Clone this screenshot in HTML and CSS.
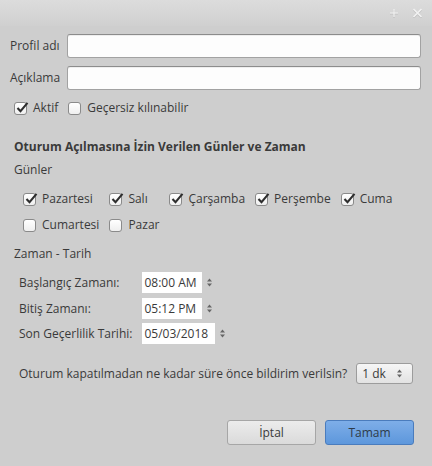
FILE: index.html
```html
<!DOCTYPE html>
<html lang="tr">
<head>
<meta charset="utf-8">
<link rel="stylesheet" href="styles.css">
</head>
<body>
<div class="window">
  <div class="titlebar">
    <svg class="tb-icon" width="10" height="10" viewBox="0 0 10 10"><path d="M5 1v8M1 5h8" stroke="#9a9a9a" stroke-width="1.2" opacity=".35" transform="translate(0,1)"/><path d="M5 1v8M1 5h8" stroke="#f2f2f2" stroke-width="1.2"/></svg>
    <svg class="tb-icon" width="11" height="10" viewBox="0 0 11 10"><path d="M1.5 1l8 8M9.5 1l-8 8" stroke="#9a9a9a" stroke-width="1.6" opacity=".35" transform="translate(0,1)"/><path d="M1.5 1l8 8M9.5 1l-8 8" stroke="#f2f2f2" stroke-width="1.6"/></svg>
  </div>
  <div class="content">
    <div class="fields">
      <label class="flabel">Profil adı</label>
      <div class="entry"></div>
      <label class="flabel">Açıklama</label>
      <div class="entry"></div>
    </div>

    <div class="checkrow top-checks">
      <span class="check"><span class="cb on"><svg viewBox="0 0 16 16" width="16" height="16"><path d="M3.5 8l3 3.2L13.5 2.8" fill="none" stroke="#2e2e2e" stroke-width="2.1"/></svg></span>Aktif</span>
      <span class="check"><span class="cb"></span>Geçersiz kılınabilir</span>
    </div>

    <div class="section">
      <div class="heading">Oturum Açılmasına İzin Verilen Günler ve Zaman</div>
      <div class="sublabel">Günler</div>
      <div class="days">
        <span class="check"><span class="cb on"><svg viewBox="0 0 16 16" width="16" height="16"><path d="M3.5 8l3 3.2L13.5 2.8" fill="none" stroke="#2e2e2e" stroke-width="2.1"/></svg></span>Pazartesi</span>
        <span class="check"><span class="cb on"><svg viewBox="0 0 16 16" width="16" height="16"><path d="M3.5 8l3 3.2L13.5 2.8" fill="none" stroke="#2e2e2e" stroke-width="2.1"/></svg></span>Salı</span>
        <span class="check"><span class="cb on"><svg viewBox="0 0 16 16" width="16" height="16"><path d="M3.5 8l3 3.2L13.5 2.8" fill="none" stroke="#2e2e2e" stroke-width="2.1"/></svg></span>Çarşamba</span>
        <span class="check"><span class="cb on"><svg viewBox="0 0 16 16" width="16" height="16"><path d="M3.5 8l3 3.2L13.5 2.8" fill="none" stroke="#2e2e2e" stroke-width="2.1"/></svg></span>Perşembe</span>
        <span class="check"><span class="cb on"><svg viewBox="0 0 16 16" width="16" height="16"><path d="M3.5 8l3 3.2L13.5 2.8" fill="none" stroke="#2e2e2e" stroke-width="2.1"/></svg></span>Cuma</span>
        <span class="check"><span class="cb"></span>Cumartesi</span>
        <span class="check"><span class="cb"></span>Pazar</span>
      </div>

      <div class="sublabel zt">Zaman - Tarih</div>
      <div class="times">
        <span class="tlabel">Başlangıç Zamanı:</span>
        <span class="spin"><span class="sbox w-time">08:00 AM</span><svg class="arrows" width="7" height="11" viewBox="0 0 7 11"><path d="M1 4.5L3.5 1.5 6 4.5zM1 6.5L3.5 9.5 6 6.5z" fill="#666"/></svg></span>
        <span class="tlabel">Bitiş Zamanı:</span>
        <span class="spin"><span class="sbox w-time">05:12 PM</span><svg class="arrows" width="7" height="11" viewBox="0 0 7 11"><path d="M1 4.5L3.5 1.5 6 4.5zM1 6.5L3.5 9.5 6 6.5z" fill="#666"/></svg></span>
        <span class="tlabel">Son Geçerlilik Tarihi:</span>
        <span class="spin"><span class="sbox w-date">05/03/2018</span><svg class="arrows" width="7" height="11" viewBox="0 0 7 11"><path d="M1 4.5L3.5 1.5 6 4.5zM1 6.5L3.5 9.5 6 6.5z" fill="#666"/></svg></span>
      </div>

      <div class="notify">
        <span>Oturum kapatılmadan ne kadar süre önce bildirim verilsin?</span>
        <span class="combo"><span>1 dk</span><svg width="7" height="11" viewBox="0 0 7 11"><path d="M1 4.5L3.5 1.5 6 4.5zM1 6.5L3.5 9.5 6 6.5z" fill="#666"/></svg></span>
      </div>
    </div>

    <div class="actions">
      <button class="btn">İptal</button>
      <button class="btn primary">Tamam</button>
    </div>
  </div>
</div>
</body>
</html>
```

FILE: styles.css
```css
* { box-sizing: border-box; }
html, body { margin: 0; padding: 0; }
body { background: #cecece; }

.window {
  width: 432px;
  height: 466px;
  background: #cecece;
  font-family: "Open Sans", "Noto Sans", sans-serif;
  font-size: 12px;
  color: #3a3a3a;
  overflow: hidden;
}

.titlebar {
  height: 26px;
  background: linear-gradient(#dcdcdc, #d0d0d0);
  display: flex;
  justify-content: flex-end;
  align-items: center;
  gap: 13px;
  padding-right: 9px;
  padding-bottom: 1px;
}
.tb-icon { display: block; }

.content { padding: 8px 11px 0 10px; }

.fields {
  display: grid;
  grid-template-columns: auto 1fr;
  column-gap: 7px;
  row-gap: 8px;
  align-items: center;
}
.flabel { line-height: 16px; }
.entry {
  height: 24px;
  background: #fdfdfd;
  border: 1px solid #a2a2a2;
  border-top-color: #8c8c8c;
  border-radius: 3px;
  box-shadow: inset 0 1px 0 rgba(0,0,0,.06);
}

.checkrow {
  display: flex;
  gap: 10px;
  margin-top: 10px;
  padding-left: 4px;
}
.check {
  display: inline-flex;
  align-items: center;
  height: 16px;
  line-height: 16px;
  white-space: nowrap;
}
.cb {
  position: relative;
  width: 13px;
  height: 13px;
  border: 1px solid #8a8a8a;
  border-radius: 3px;
  background: linear-gradient(#ffffff, #efefef);
  margin-right: 6px;
  flex: none;
}
.cb svg {
  position: absolute;
  left: -1px;
  top: -3px;
}

.section { padding-left: 4px; }
.heading {
  font-weight: bold;
  margin-top: 23px;
  line-height: 16px;
}
.sublabel { line-height: 16px; margin-top: 7px; }

.days {
  display: grid;
  grid-template-columns: repeat(5, auto);
  justify-content: start;
  column-gap: 10px;
  row-gap: 10px;
  margin-top: 13px;
  margin-left: 9px;
}

.zt { margin-top: 13px; }

.times {
  display: grid;
  grid-template-columns: auto auto;
  justify-content: start;
  column-gap: 10px;
  row-gap: 4.5px;
  margin-top: 10px;
  margin-left: 5px;
  align-items: center;
}
.tlabel { line-height: 21px; }
.spin { display: flex; align-items: center; }
.sbox {
  height: 21px;
  line-height: 21px;
  background: #ffffff;
  padding-left: 2px;
  white-space: nowrap;
}
.w-time { width: 60px; }
.w-date { width: 73px; }
.arrows { margin-left: 4px; }

.notify {
  display: flex;
  align-items: center;
  gap: 9px;
  margin-top: 19px;
  margin-left: 5px;
}
.combo {
  width: 57px;
  height: 21px;
  border: 1px solid #9c9c9c;
  border-radius: 3px;
  background: linear-gradient(#f6f6f6, #e2e2e2);
  display: flex;
  align-items: center;
  justify-content: space-between;
  padding: 0 9px 0 5px;
}
.combo svg { display: block; }

.actions {
  display: flex;
  justify-content: flex-end;
  gap: 9px;
  margin-top: 36px;
  padding-right: 7px;
}
.btn {
  width: 89px;
  height: 25px;
  font: inherit;
  color: #3a3a3a;
  border: 1px solid #a6a6a6;
  border-radius: 3px;
  background: linear-gradient(#ececec, #dadada);
  padding: 0;
}
.btn.primary {
  background: linear-gradient(#7eaee8, #5d97dc);
  border-color: #4a7cbd;
  color: #2e3a48;
}
```
